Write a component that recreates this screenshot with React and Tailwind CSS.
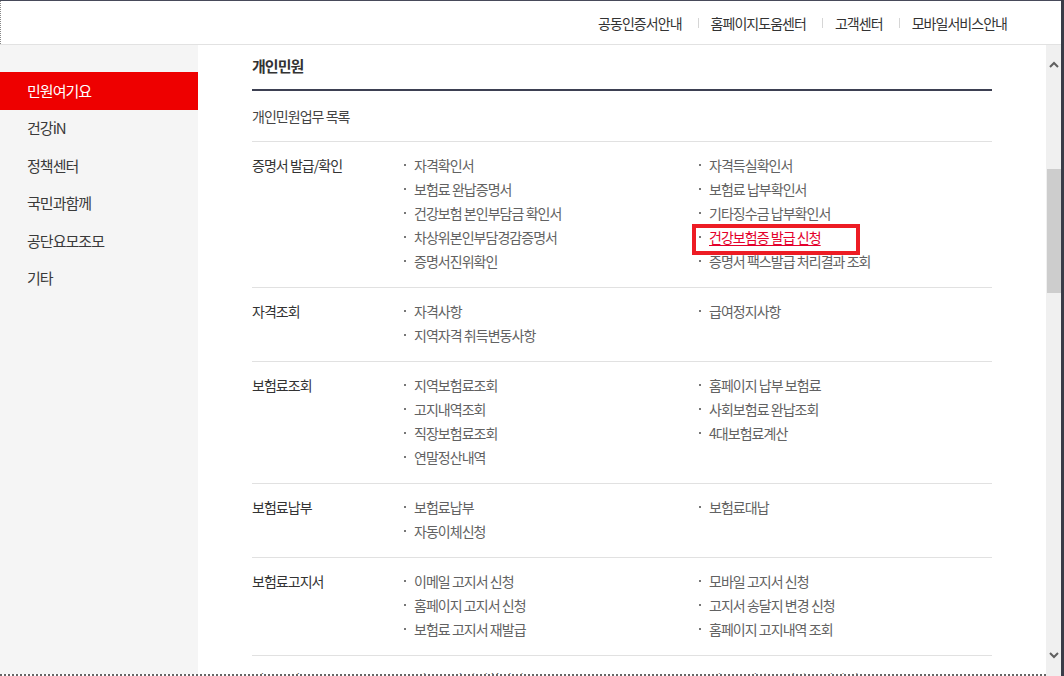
// 개인민원 업무 목록 화면 (Windows 창 캡처 형태)

const topLinks = ['공동인증서안내', '홈페이지도움센터', '고객센터', '모바일서비스안내']

const sideMenu = ['민원여기요', '건강iN', '정책센터', '국민과함께', '공단요모조모', '기타']

const rows = [
  {
    label: '증명서 발급/확인',
    left: ['자격확인서', '보험료 완납증명서', '건강보험 본인부담금 확인서', '차상위본인부담경감증명서', '증명서진위확인'],
    right: ['자격득실확인서', '보험료 납부확인서', '기타징수금 납부확인서', { text: '건강보험증 발급 신청', hl: true }, '증명서 팩스발급 처리결과 조회'],
  },
  { label: '자격조회', left: ['자격사항', '지역자격 취득변동사항'], right: ['급여정지사항'] },
  {
    label: '보험료조회',
    left: ['지역보험료조회', '고지내역조회', '직장보험료조회', '연말정산내역'],
    right: ['홈페이지 납부 보험료', '사회보험료 완납조회', '4대보험료계산'],
  },
  { label: '보험료납부', left: ['보험료납부', '자동이체신청'], right: ['보험료대납'] },
  {
    label: '보험료고지서',
    left: ['이메일 고지서 신청', '홈페이지 고지서 신청', '보험료 고지서 재발급'],
    right: ['모바일 고지서 신청', '고지서 송달지 변경 신청', '홈페이지 고지내역 조회'],
  },
  { label: '의료급여', left: ['의료급여 자격확인서'], right: ['의료급여 수급권자 증명서 발급'] },
]

function Item({ item }) {
  const text = typeof item === 'string' ? item : item.text
  const hl = typeof item !== 'string' && item.hl
  return (
    <li className="relative flex items-center h-6">
      <span className="ml-[4px] mr-[8px] w-[2px] h-[2px] bg-[#777] shrink-0" />
      {hl ? (
        <span className="text-[#e4002b] underline underline-offset-2">{text}</span>
      ) : (
        <span>{text}</span>
      )}
      {/* 빨간 강조 박스 (캡처 위에 그려진 표시) */}
      {hl && (
        <span className="absolute left-[-3px] top-[-1px] w-[168px] h-[31px] border-4 border-[#ed1c24] pointer-events-none" />
      )}
    </li>
  )
}

function ScrollBar() {
  return (
    <div className="w-[15px] bg-[#f0f0f0] flex flex-col">
      <div className="h-[38px] flex items-center justify-center">
        <svg width="10" height="7" viewBox="0 0 10 7">
          <polyline points="1,6 5,2 9,6" fill="none" stroke="#606060" strokeWidth="2" />
        </svg>
      </div>
      <div className="flex-1 pt-[86px] pl-[1px]">
        <div className="h-[124px] bg-[#cdcdcd]" />
      </div>
      <div className="h-[41px] flex items-center justify-center">
        <svg width="10" height="7" viewBox="0 0 10 7">
          <polyline points="1,1 5,5 9,1" fill="none" stroke="#606060" strokeWidth="2" />
        </svg>
      </div>
    </div>
  )
}

export default function App() {
  return (
    <div className="w-[1064px] h-[676px] overflow-hidden flex bg-white font-['Noto_Sans_CJK_KR','Malgun_Gothic',sans-serif] tracking-[-0.06em]">
      <div className="w-[1061px] flex flex-col border-t border-[#474a5a]">
        {/* 상단 유틸 메뉴 */}
        <div className="h-[44px] shrink-0 border-b border-[#e2e2e2]">
          <div className="h-full border-l border-dotted border-[#888] flex items-center justify-end pr-[54px] text-[14px] text-[#333]">
            {topLinks.map((t, i) => (
              <div key={t} className="flex items-center">
                {i > 0 && <span className="ml-[16px] mr-[12px] w-px h-[10px] bg-[#d6d6d6]" />}
                <a className="leading-5">{t}</a>
              </div>
            ))}
          </div>
        </div>

        <div className="flex flex-1 min-h-0">
          <div className="flex-1 flex min-h-0 overflow-hidden border-b-2 border-dotted border-b-[#666]">
            {/* 좌측 메뉴 */}
            <ul className="w-[198px] shrink-0 bg-[#f5f5f5] pt-[27px] text-[15px] text-[#3a3a3a]">
              {sideMenu.map((m, i) => (
                <li
                  key={m}
                  className={`h-[37.5px] flex items-center pl-[27px] ${i === 0 ? 'bg-[#ee0000] text-white' : ''}`}
                >
                  {m}
                </li>
              ))}
            </ul>

            {/* 본문 */}
            <div className="flex-1 px-[54px]">
              <h2 className="pt-[10px] pb-[12px] leading-[22px] text-[15px] font-bold text-[#333] border-b-2 border-[#3d4052]">
                개인민원
              </h2>
              <p className="pt-[13px] pb-[13px] leading-6 text-[14px] text-[#444] border-b border-[#e1e1e1]">
                개인민원업무 목록
              </p>
              {rows.map((r) => (
                <div
                  key={r.label}
                  className="grid grid-cols-[148px_295px_1fr] pt-[11px] pb-[14px] border-b border-[#e1e1e1] text-[14px]"
                >
                  <div className="leading-6 text-[#333]">{r.label}</div>
                  <ul className="text-[#626262]">
                    {r.left.map((it) => (
                      <Item key={it} item={it} />
                    ))}
                  </ul>
                  <ul className="text-[#626262]">
                    {r.right.map((it) => (
                      <Item key={typeof it === 'string' ? it : it.text} item={it} />
                    ))}
                  </ul>
                </div>
              ))}
            </div>
          </div>
          <ScrollBar />
        </div>
      </div>
      <div className="w-[3px] bg-[#3a3c48]" />
    </div>
  )
}
